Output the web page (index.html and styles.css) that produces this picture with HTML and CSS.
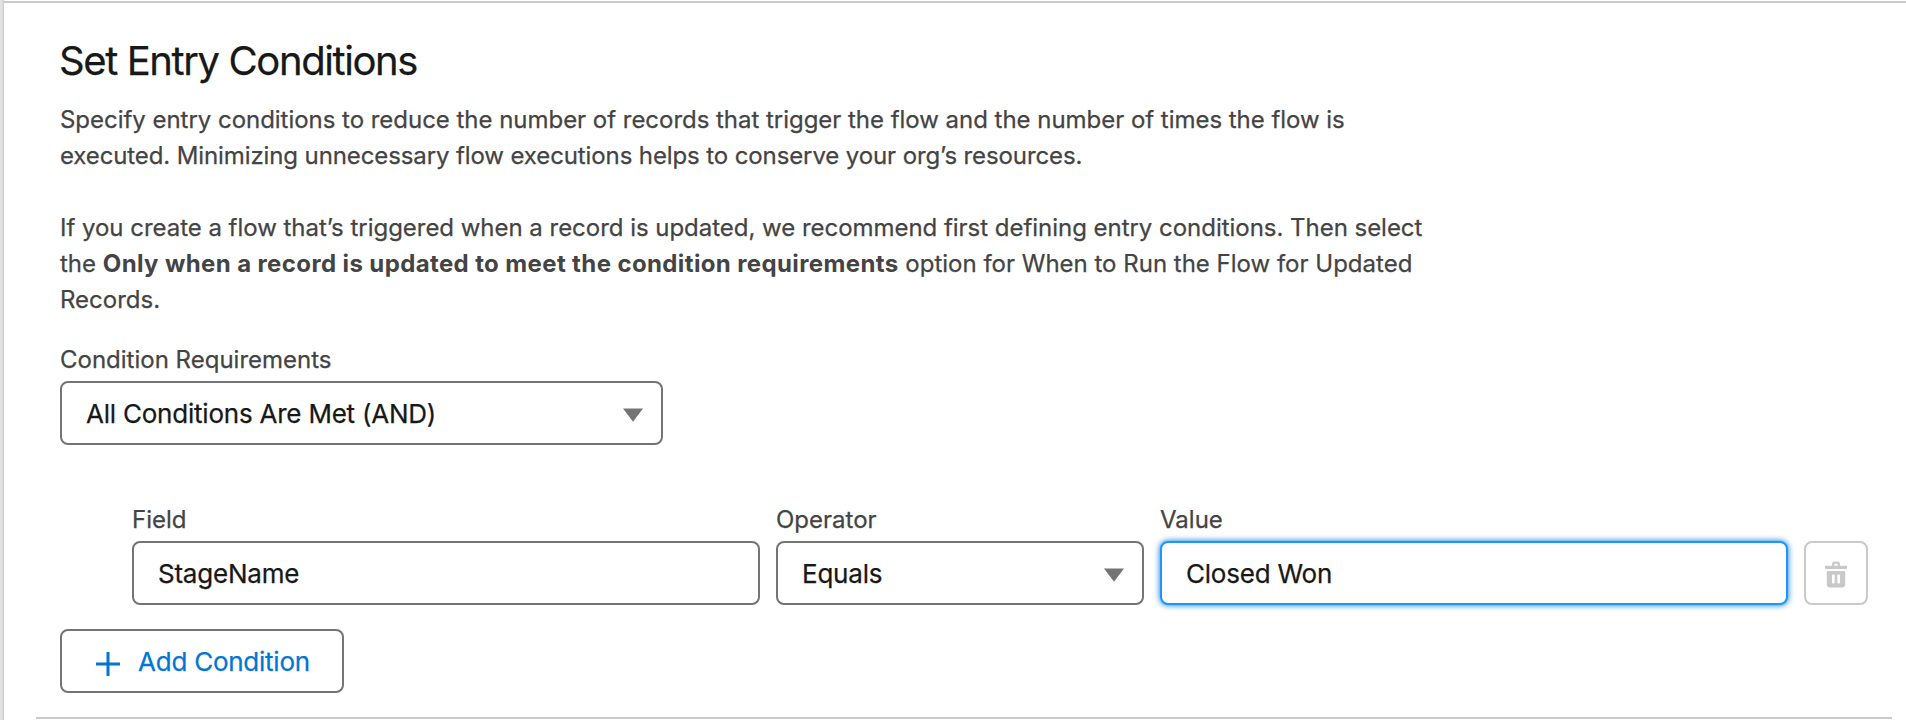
FILE: index.html
```html
<!DOCTYPE html>
<html lang="en">
<head>
<meta charset="utf-8">
<title>Set Entry Conditions</title>
<link rel="stylesheet" href="styles.css">
</head>
<body>
<main class="panel">
  <section class="entry">
    <h1 class="title">Set Entry Conditions</h1>
    <div class="description">
      <p class="text"><span class="snug">Specify entry conditions to reduce the number of records that trigger the flow and the number of times the flow is</span><br><span class="tight">executed. Minimizing unnecessary flow executions helps to conserve your org’s resources.</span></p>
      <p class="text"><span class="snug">If you create a flow that’s triggered when a record is updated, we recommend first defining entry conditions. Then select</span><br>the <b class="strong">Only when a record is updated to meet the condition requirements</b> option for When to Run the Flow for Updated<br>Records.</p>
    </div>
    <div class="field requirements">
      <span class="label">Condition Requirements</span>
      <div class="control"><span>All Conditions Are Met (AND)</span><svg class="caret" viewBox="0 0 20 14"><path d="M0 0.5h20L10 13.7z"/></svg></div>
    </div>
    <div class="condition">
      <div class="field wide">
        <span class="label">Field</span>
        <div class="control"><span>StageName</span></div>
      </div>
      <div class="field operator">
        <span class="label">Operator</span>
        <div class="control"><span>Equals</span><svg class="caret" viewBox="0 0 20 14"><path d="M0 0.5h20L10 13.7z"/></svg></div>
      </div>
      <div class="field wide">
        <span class="label">Value</span>
        <div class="control focused"><span>Closed Won</span></div>
      </div>
      <button class="delete" disabled aria-label="Delete condition">
        <svg class="trash" viewBox="0 0 22 27"><path fill-rule="evenodd" d="M7 4.8V3.2C7 1.6 8.200.5 9.800.5h2.400C13.800.5 15 1.600 15 3.200V4.800h6.300c.5 0 .7.300.7.700v1.800c0 .4-.2.700-.7.700H.7C.2 8 0 7.700 0 7.300V5.500c0-.4.2-.7.7-.700zM9.300 4.800h3.400V3.400c0-.5-.2-.7-.7-.700h-2c-.5 0-.7.200-.7.700zM2.700 10.100h16.600c.6 0 .9.300.9.900v12.500c0 1.800-1.200 3-3 3H4.800c-1.800 0-3-1.200-3-3V11c0-.6.3-.9.900-.9zM7.800 13.600c-.5 0-.8.300-.8.800v7.200c0 .5.300.8.800.8h1.100c.5 0 .8-.3.800-.8v-7.200c0-.5-.3-.8-.8-.8zM13.100 13.600c-.5 0-.8.300-.8.800v7.200c0 .5.300.8.800.8h1.100c.5 0 .8-.3.800-.8v-7.200c0-.5-.3-.8-.8-.8z"/></svg>
      </button>
    </div>
    <button class="add"><svg class="plus" viewBox="0 0 24 24"><path d="M12 0v24M0 12h24"/></svg><span>Add Condition</span></button>
  </section>
</main>
</body>
</html>
```
FILE: styles.css
```css
* { box-sizing: border-box; }
body {
  margin: 0;
  height: 720px;
  overflow: hidden;
  padding: 1px 0 0 4px;
  background: linear-gradient(90deg, #e6e5e5 0, #dededd 2px, #cecece 4px, #fff 4px);
  font-family: Inter, "Liberation Sans", sans-serif;
  color: #444;
  -webkit-text-stroke: 0.25px currentColor;
}
.panel {
  height: 719px;
  padding: 33px 14px 1px 32px;
  border-top: 2px solid #c9c9c9;
  background: #fff;
}
.entry {
  height: 683px;
  padding-left: 24px;
  border-bottom: 2px solid #c9c9c9;
}
.title {
  margin: 0 0 16px -1px;
  font-size: 40px;
  line-height: 50px;
  font-weight: 400;
  letter-spacing: -1.4px;
  color: #181818;
}
.description { display: flex; flex-direction: column; gap: 36px; margin-bottom: 24px; }
.text { margin: 0; font-size: 24px; line-height: 36px; white-space: nowrap; }
.snug { letter-spacing: -0.03px; }
.tight { letter-spacing: -0.11px; }
.strong { font-weight: 700; letter-spacing: 0.38px; -webkit-text-stroke: 0; }
.field { display: flex; flex-direction: column; }
.label { font-size: 24px; line-height: 36px; margin-bottom: 3px; }
.requirements { width: 603px; margin-bottom: 56px; }
.wide { width: 628px; }
.operator { width: 368px; }
.control {
  display: flex;
  align-items: center;
  justify-content: space-between;
  height: 64px;
  padding: 0 18px 0 24px;
  border: 2px solid #747474;
  border-radius: 8px;
  background: #fff;
  color: #181818;
  font-size: 26px;
  letter-spacing: -0.22px;
  white-space: nowrap;
}
.focused { border-color: #1b96ff; box-shadow: 0 0 6px #0176d3; }
.caret { width: 20px; height: 14px; margin-top: 3px; fill: #747474; }
.condition { display: flex; align-items: flex-end; gap: 16px; height: 103px; padding-left: 72px; margin: -3px 0 24px; }
.requirements + .condition { margin-top: 0; }
.delete {
  display: flex;
  align-items: center;
  justify-content: center;
  width: 64px;
  height: 64px;
  padding: 2px 0 0;
  border: 2px solid #c9c9c9;
  border-radius: 8px;
  background: #fff;
}
.trash { width: 22px; height: 27px; fill: #c9c9c9; }
.requirements { margin-bottom: 57px; }
.add {
  display: flex;
  align-items: center;
  gap: 18px;
  width: 284px;
  height: 64px;
  padding: 0 0 0 34px;
  border: 2px solid #747474;
  border-radius: 8px;
  background: #fff;
  color: #0176d3;
  font: 400 26px Inter, "Liberation Sans", sans-serif;
  letter-spacing: -0.24px;
  white-space: nowrap;
}
.plus { width: 24px; height: 24px; margin-top: 5px; fill: none; stroke: #0176d3; stroke-width: 3; }
```
